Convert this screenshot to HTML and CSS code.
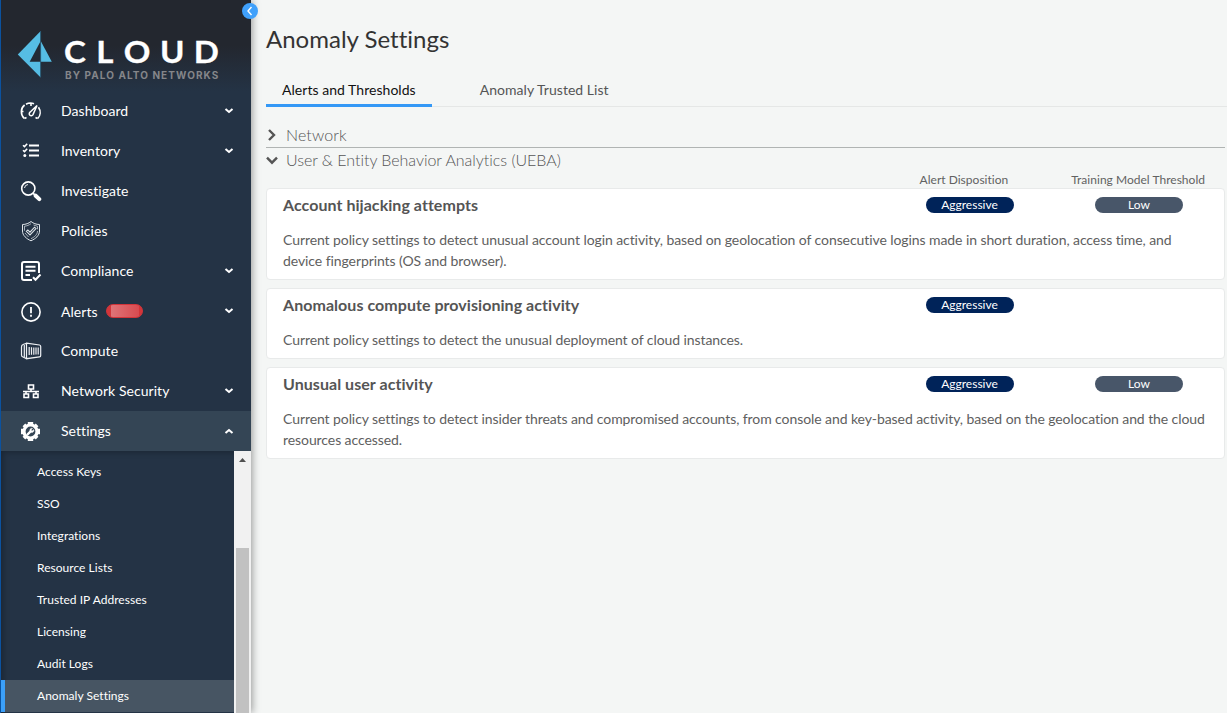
FILE: index.html
```html
<!DOCTYPE html>
<html lang="en">
<head>
<meta charset="utf-8">
<title>Anomaly Settings</title>
<link rel="stylesheet" href="styles.css">
</head>
<body>
<div class="app">
  <aside class="sidebar">
    <header class="brand">
      <svg class="brand-mark" width="36" height="48" viewBox="0 0 36 48">
        <path d="M23.7 1L.8 24.500 23.700 47.500z" fill="#56bde4"/>
        <path d="M23.400 11.500V31.700H12.700z" fill="#222a34"/>
        <path d="M24 11.500L34.800 31.700H24z" fill="#56bde4"/>
        <path d="M23.600 1V47" stroke="#28566f" stroke-width=".9"/>
      </svg>
      <div class="brand-text">
        <div class="brand-name"><span>C</span><span>L</span><span>O</span><span>U</span><span>D</span></div>
        <div class="brand-sub">BY PALO ALTO NETWORKS</div>
      </div>
    </header>
    <button class="collapse" aria-label="Collapse"><svg width="16" height="16" viewBox="0 0 16 16"><path d="M9.500 4L6 8l3.500 4" fill="none" stroke="#fff" stroke-width="1.400"/></svg></button>
    <nav class="nav">
      <a class="item"><svg class="icon" viewBox="0 0 22 22"><g fill="none" stroke="#fff" stroke-width="1.600"><path d="M4.300 18.500C.3 14.500.4 8.200 4.600 5M6 4.200C8.500 2.800 11.500 2.700 14 3.700M18.500 7.300c2.500 3.700 2.100 8.300-.8 11.200M11 3v3M2 11.500h1.500M4.500 18.500l2-1M17.500 18.500l-2-1"/><path d="M17 5.500l-7 6.700a2 2 0 1 0 2.900 2.700z" stroke-width="1.500"/></g></svg><span>Dashboard</span><svg class="caret" viewBox="0 0 10 6"><path d="M1.500 1l3.500 3L8.500 1"/></svg></a>
      <a class="item"><svg class="icon" viewBox="0 0 22 22"><g fill="none" stroke="#fff"><path d="M9 5.500h10M9 10.500h10M9 15.500h10" stroke-width="1.800"/><path d="M3 5.200l1.500 1.400 2.700-2.800M3 10.200l1.500 1.400 2.700-2.800" stroke-width="1.500"/></g><circle cx="4.800" cy="15.500" r="1.500" fill="#fff"/></svg><span>Inventory</span><svg class="caret" viewBox="0 0 10 6"><path d="M1.500 1l3.500 3L8.500 1"/></svg></a>
      <a class="item"><svg class="icon" viewBox="0 0 22 22"><g fill="none" stroke="#fff"><circle cx="8.300" cy="8.500" r="6.600" stroke-width="1.600"/><path d="M4.500 8a4 4 0 0 1 3.500-3.500" stroke-width=".9"/><path d="M13 13.200l2 2" stroke-width="1.800"/><path d="M15.700 15.700l3.600 3.400" stroke-width="4" stroke-linecap="round"/></g></svg><span>Investigate</span></a>
      <a class="item"><svg class="icon" viewBox="0 0 22 22"><g fill="none" stroke="#dfe5ea" stroke-width="1"><path d="M11 1.500c2.500 2 5 2.900 8.500 3v6.500c0 4.500-4 7.800-8.500 9.800C6.500 18.800 2.500 15.500 2.500 11V4.500c3.500-.1 6-1 8.500-3z"/><path d="M11 3.700c-2 1.500-4 2.200-6.500 2.500v4.500M17.500 11c0 3.500-3 6-6.500 7.700M13.500 5l4 1.300v3M5 13l3.500 4" stroke-width=".7"/><path d="M6.300 11.300l1.500-1.400 2.200 2.300 4.500-5 1.500 1.400-6 6.400z" stroke-width="1.100"/></g></svg><span>Policies</span></a>
      <a class="item"><svg class="icon" viewBox="0 0 22 22"><g fill="none" stroke="#fff" stroke-width="2"><path d="M12 20H4q-2 0-2-2V4q0-2 2-2h13q2 0 2 2v9"/><path d="M5.500 6.700h10M5.500 10.700h10M5.500 15h4.500" stroke-width="1.900"/><path d="M13 17.300l2.500 2.500 5-5.300"/></g></svg><span>Compliance</span><svg class="caret" viewBox="0 0 10 6"><path d="M1.500 1l3.500 3L8.500 1"/></svg></a>
      <a class="item alerts"><svg class="icon" viewBox="0 0 22 22"><g fill="none" stroke="#fff"><circle cx="11" cy="12" r="9.100" stroke-width="1.600"/><path d="M11 7v6.200M11 14.800v2" stroke-width="1.800"/></g></svg><span>Alerts</span><i class="count"></i><svg class="caret" viewBox="0 0 10 6"><path d="M1.500 1l3.500 3L8.500 1"/></svg></a>
      <a class="item"><svg class="icon" viewBox="0 0 22 22"><g fill="none" stroke="#eef1f4"><path d="M6.500 3.200L19.500 5q1.200.2 1.200 1.500v9q0 1.300-1.200 1.400l-13 1.800zM6.500 3.200L3 4.500Q1.500 5 1.500 7v8q0 1.700 1.500 2l3.500 1.600M4.300 5v12" stroke-width="1.200"/><path d="M9.200 7v8M11.500 7.200v7.600M13.800 7.400v7.300M16 7.500v7M18.200 7.500v7" stroke-width="1.200"/></g></svg><span>Compute</span></a>
      <a class="item"><svg class="icon" viewBox="0 0 22 22"><g fill="none" stroke="#fff" stroke-width="1.600"><path d="M8.500 5h5v4h-5zM4 14h4.500v3.500H4zM13.500 14H18v3.500h-4.500zM11 9v2.500M3 11.500h16M6 11.500V14M16 11.500V14"/></g></svg><span>Network Security</span><svg class="caret" viewBox="0 0 10 6"><path d="M1.500 1l3.500 3L8.500 1"/></svg></a>
      <a class="item open"><svg class="icon" viewBox="0 0 22 22"><circle cx="10.500" cy="11.500" r="6.500" fill="none" stroke="#fff" stroke-width="3.200"/><path d="M10.500 2v3.500M10.500 17.500V21M1 11.500h3.500M16.500 11.500H20" stroke="#fff" stroke-width="5.400"/><path d="M3.900 4.900l2.300 2.300M14.800 15.800l2.300 2.300M3.900 18.100l2.300-2.300M14.800 7.200l2.300-2.300" stroke="#fff" stroke-width="3.800"/><path d="M7.600 14.400l2.800-2.800" fill="none" stroke="#fff" stroke-width="2.200" stroke-linecap="round"/><path d="M12.600 8.400a2.100 2.100 0 1 0 1.200 1.200l-1.700 1.300-1-1z" fill="#fff" stroke="#fff" stroke-width=".4"/></svg><span>Settings</span><svg class="caret" viewBox="0 0 10 6"><path d="M1.500 5L5 2l3.500 3"/></svg></a>
    </nav>
    <div class="sub-wrap">
      <nav class="subnav">
        <a>Access Keys</a><a>SSO</a><a>Integrations</a><a>Resource Lists</a><a>Trusted IP Addresses</a><a>Licensing</a><a>Audit Logs</a><a class="current">Anomaly Settings</a>
      </nav>
      <div class="scroll"><svg width="17" height="17" viewBox="0 0 17 17"><path d="M5 11h7L8.500 7z" fill="#505050"/></svg><div class="thumb"></div></div>
    </div>
  </aside>
  <main class="main">
    <h1>Anomaly Settings</h1>
    <div class="tabs"><a class="tab active"><span>Alerts and Thresholds</span></a><a class="tab"><span>Anomaly Trusted List</span></a></div>
    <section class="group network"><svg width="12" height="14" viewBox="0 0 12 14"><path d="M3 2l5 5-5 5" class="arrow"/></svg><span>Network</span></section>
    <section class="group ueba"><svg width="12" height="14" viewBox="0 0 12 14"><path d="M1 3.700l5 5 5-5" class="arrow"/></svg><span>User &amp; Entity Behavior Analytics (UEBA)</span></section>
    <div class="heads"><span>Alert Disposition</span><span>Training Model Threshold</span></div>
    <div class="cards">
      <article class="card"><div class="row"><h2>Account hijacking attempts</h2><b class="pill navy">Aggressive</b><b class="pill slate">Low</b></div>
        <p>Current policy settings to detect unusual account login activity, based on geolocation of consecutive logins made in short duration, access time, and<br>device fingerprints (OS and browser).</p></article>
      <article class="card"><div class="row"><h2>Anomalous compute provisioning activity</h2><b class="pill navy">Aggressive</b></div>
        <p>Current policy settings to detect the unusual deployment of cloud instances.</p></article>
      <article class="card"><div class="row"><h2>Unusual user activity</h2><b class="pill navy">Aggressive</b><b class="pill slate">Low</b></div>
        <p>Current policy settings to detect insider threats and compromised accounts, from console and key-based activity, based on the geolocation and the cloud<br>resources accessed.</p></article>
    </div>
  </main>
</div>
</body>
</html>
```
FILE: styles.css
```css
* { box-sizing: border-box; }
body { margin: 0; font-family: Lato, sans-serif; background: #f4f6f5; color: #555; }
.app { display: flex; width: 1227px; height: 713px; overflow: hidden; }
.sidebar { position: relative; z-index: 1; flex: none; display: flex; flex-direction: column; width: 251px; border-left: 1px solid #0b529f; background: #243345; color: #fff; box-shadow: 1px 0 8px rgba(0,0,0,.4); }
.brand { display: flex; flex: none; height: 91px; padding: 30px 0 0 16px; background: linear-gradient(#23272f 0, #23272f 50%, #243345 100%); }
.brand-mark { flex: none; }
.brand-text { padding: 4px 0 0 11px; }
.brand-name { display: flex; justify-content: space-between; width: 153px; height: 35px; margin-left: 1px; font: 700 30px/35px Lato, sans-serif; }
.brand-name span { transform: scaleX(1.1); -webkit-text-stroke: .3px #fff; }
.brand-sub { font: 700 10px/12px Inter, sans-serif; letter-spacing: 1.07px; margin-left: 1px; color: #85868a; white-space: nowrap; }
.collapse { position: absolute; left: 241px; top: 3px; width: 16px; height: 16px; border: 0; padding: 0; border-radius: 50%; background: #3fa0fb; }
.collapse svg { display: block; }
.nav { flex: none; }
.item { display: flex; align-items: center; height: 40px; padding: 0 17px 0 19px; font-size: 14px; letter-spacing: .055px; }
.item span { margin-left: 19px; padding-bottom: 2px; white-space: nowrap; }
.icon { width: 22px; height: 22px; flex: none; }
.caret { width: 10px; height: 6px; margin-left: auto; fill: none; stroke: #fff; stroke-width: 2; }
.item.alerts > span { padding-bottom: 0; }
.count { width: 37px; height: 14px; margin-left: 8px; border-radius: 7px; border: 1px solid #d3353a; background: linear-gradient(90deg, #d3353a 4px, #df7478 4px, #d94b50 32px, #d3353a 32px); }
.open { background: #344555; }
.sub-wrap { flex: 1; display: flex; min-height: 0; }
.subnav { width: 233px; padding-top: 5px; box-shadow: inset 6px 5px 6px -4px rgba(0,0,0,.28); }
.subnav a { display: flex; align-items: center; height: 32px; padding: 0 0 2px 36px; font-size: 12px; letter-spacing: .03px; }
.subnav .current { padding-left: 32px; border-left: 4px solid #3b9ff8; background: #475563; }
.scroll { display: flex; flex-direction: column; width: 17px; background: #f1f1f1; }
.thumb { width: 13px; height: 165px; margin: 80px 2px 0; background: #c1c1c1; }
.main { width: 974px; margin-left: 15px; flex: none; }
h1 { margin: 23px 0 0; height: 33px; font: 400 24px/32px Lato, sans-serif; letter-spacing: .01px; color: #333; }
.tabs { display: flex; height: 51px; padding-top: 18px; border-bottom: 1px solid #e5e7e6; font-size: 14px; letter-spacing: .04px; }
.tab { height: 33px; padding: 0 16px; margin-right: 32px; line-height: 32px; }
.active { border-bottom: 3px solid #3498f6; color: #111; }
.group { display: flex; align-items: center; gap: 8px; width: 959px; font-size: 16px; font-weight: 300; }
.group span { padding-bottom: 2px; }
.network { height: 41px; padding-top: 16px; border-bottom: 1px solid #b0b4b3; letter-spacing: .1px; }
.ueba { height: 25px; letter-spacing: -.03px; }
.arrow { fill: none; stroke: #555; stroke-width: 2.4; }
.heads { display: flex; justify-content: flex-end; gap: 63px; height: 15px; width: 959px; padding-right: 20px; font-size: 12px; line-height: 13px; letter-spacing: .02px; color: #626262; }
.cards { display: flex; flex-direction: column; gap: 8px; width: 959px; }
.card { padding: 7px 16px 8px; border: 1px solid #e8eaea; border-radius: 4px; background: #fff; }
.row { display: flex; height: 19px; align-items: flex-start; }
h2 { width: 643px; margin: 0; font-size: 16px; line-height: 17px; letter-spacing: .05px; }
.pill { width: 88px; height: 16px; margin: 1px 81px 0 0; border-radius: 8px; font: 400 12px/15px Lato, sans-serif; color: #fff; text-align: center; }
.slate { margin-right: 0; background: #485669; }
.navy { padding-right: 1px; background: #002359; }
p { margin: 14px 0 0; font-size: 14px; line-height: 21px; letter-spacing: -.08px; color: #606060; white-space: nowrap; }
```
